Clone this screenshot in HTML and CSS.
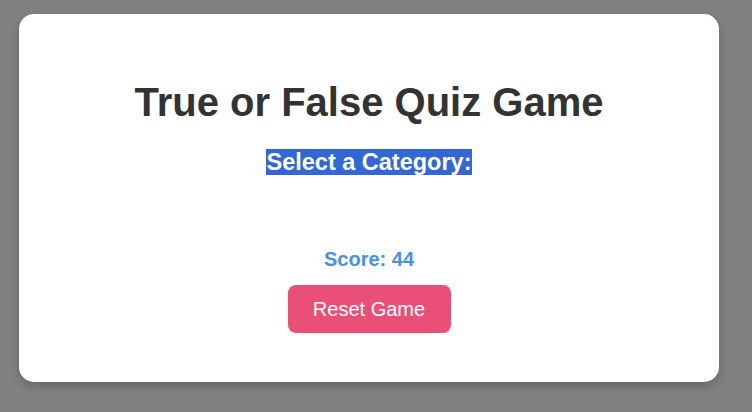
FILE: index.html
```html
<!DOCTYPE html>
<html lang="en">
<head>
<meta charset="utf-8">
<title>True or False Quiz Game</title>
<link rel="stylesheet" href="styles.css">
</head>
<body>
<main class="card">
  <h1 class="title">True or False Quiz Game</h1>
  <h2 class="subtitle"><span class="selected">Select a Category:</span></h2>
  <div class="categories"></div>
  <p class="score">Score: 44</p>
  <button class="reset" type="button">Reset Game</button>
</main>
</body>
</html>
```
FILE: styles.css
```css
html, body {
  margin: 0;
  padding: 0;
  height: 100%;
}
body {
  background: #808080;
  font-family: "Liberation Sans", Arial, sans-serif;
  padding: 14px 33px 0 19px;
  box-sizing: border-box;
}
.card {
  width: 700px;
  height: 368px;
  box-sizing: border-box;
  background: #fff;
  border-radius: 15px;
  box-shadow: 0 4px 10px rgba(0, 0, 0, 0.2);
  padding: 40px 40px 0;
  display: flex;
  flex-direction: column;
  align-items: center;
  text-align: center;
}
.title {
  margin: 26px 0 0;
  font-size: 40px;
  line-height: 45px;
  font-weight: bold;
  color: #333;
}
.subtitle {
  margin: 24px 0 0;
  font-size: 23.5px;
  line-height: 27px;
  font-weight: bold;
  color: #333;
}
.selected {
  background: #3367d6;
  color: #fff;
}
.categories {
  height: 72px;
}
.score {
  margin: 0;
  font-size: 20px;
  line-height: 23px;
  font-weight: bold;
  color: #4a90e2;
}
.reset {
  margin-top: 14px;
  width: 163px;
  height: 48px;
  border: none;
  border-radius: 8px;
  background: #ea4f78;
  color: #fff;
  font-family: "Liberation Sans", Arial, sans-serif;
  font-size: 20px;
  cursor: pointer;
}
```
